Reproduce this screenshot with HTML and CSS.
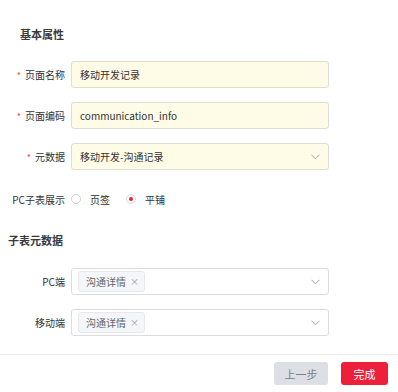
FILE: index.html
```html
<!DOCTYPE html>
<html lang="zh-CN">
<head>
    <meta charset="UTF-8">
    <meta name="viewport" content="width=device-width, initial-scale=1.0">
    <title>页面属性</title>
    <link rel="stylesheet" href="styles.css">
</head>
<body>
    <div class="panel">
        <h3 class="section-title">基本属性</h3>

        <div class="form-row">
            <label class="form-label"><span class="req">*</span>页面名称</label>
            <div class="field input-box warn">移动开发记录</div>
        </div>
        <div class="form-row">
            <label class="form-label"><span class="req">*</span>页面编码</label>
            <div class="field input-box warn">communication_info</div>
        </div>
        <div class="form-row">
            <label class="form-label"><span class="req">*</span>元数据</label>
            <div class="field input-box warn select">
                <span>移动开发-沟通记录</span>
                <svg class="arrow" width="9" height="6" viewBox="0 0 9 6"><polyline points="0.5,0.8 4.5,4.8 8.5,0.8" fill="none" stroke="#a3a3a3" stroke-width="1"/></svg>
            </div>
        </div>
        <div class="form-row radio-row">
            <label class="form-label">PC子表展示</label>
            <div class="radio-group">
                <span class="radio"><i class="dot"></i>页签</span>
                <span class="radio checked"><i class="dot"></i>平铺</span>
            </div>
        </div>

        <h3 class="section-title sub">子表元数据</h3>

        <div class="form-row">
            <label class="form-label">PC端</label>
            <div class="field input-box select">
                <span class="tag">沟通详情<em>×</em></span>
                <svg class="arrow" width="9" height="6" viewBox="0 0 9 6"><polyline points="0.5,0.8 4.5,4.8 8.5,0.8" fill="none" stroke="#a3a3a3" stroke-width="1"/></svg>
            </div>
        </div>
        <div class="form-row last">
            <label class="form-label">移动端</label>
            <div class="field input-box select">
                <span class="tag">沟通详情<em>×</em></span>
                <svg class="arrow" width="9" height="6" viewBox="0 0 9 6"><polyline points="0.5,0.8 4.5,4.8 8.5,0.8" fill="none" stroke="#a3a3a3" stroke-width="1"/></svg>
            </div>
        </div>
    </div>

    <div class="footer">
        <button class="btn btn-prev">上一步</button>
        <button class="btn btn-done">完成</button>
    </div>
</body>
</html>
```

FILE: styles.css
```css
/* Global */
body {
    margin: 0;
    background: #fff;
    font-family: "Noto Sans CJK SC", "Noto Sans", sans-serif;
    font-size: 10px;
    color: #333;
}

.panel {
    padding-top: 26px;
}

/* Section titles */
.section-title {
    margin: 0 0 19px 20px;
    font-size: 11px;
    line-height: 16px;
    font-weight: bold;
    color: #3a3a3a;
}

.section-title.sub {
    margin: 18px 0 20px 8px;
}

/* Form rows */
.form-row {
    display: flex;
    align-items: center;
    margin-bottom: 14px;
}

.form-row.last {
    margin-bottom: 18px;
}

.form-label {
    width: 65px;
    text-align: right;
    color: #333;
    flex-shrink: 0;
}

.req {
    color: #f04a3e;
    margin-right: 4px;
    font-size: 9px;
}

.field {
    margin-left: 6px;
    width: 258px;
}

.input-box {
    box-sizing: border-box;
    height: 27px;
    border: 1px solid #dcdcdc;
    border-radius: 3px;
    padding: 0 8px;
    display: flex;
    align-items: center;
    background: #fff;
}

.input-box.warn {
    background: #fefbe7;
    border-color: #e0ddd2;
}

.input-box.select {
    justify-content: space-between;
    padding-left: 6px;
    padding-right: 8px;
}

.input-box.warn.select {
    padding-left: 8px;
}

.arrow {
    display: block;
    flex-shrink: 0;
}

/* Tags */
.tag {
    height: 21px;
    box-sizing: border-box;
    display: inline-flex;
    align-items: center;
    padding: 0 5px 0 7px;
    background: #f4f6f9;
    border: 1px solid #e6e8ed;
    border-radius: 3px;
    color: #666;
}

.tag em {
    font-style: normal;
    color: #999;
    font-size: 9px;
    margin-left: 4px;
}

/* Radio */
.radio-row {
    height: 30px;
    margin-bottom: 0;
}

.radio-group {
    display: flex;
    align-items: center;
    margin-left: 6px;
}

.radio {
    display: inline-flex;
    align-items: center;
    margin-right: 16px;
    color: #333;
}

.radio .dot {
    width: 10px;
    height: 10px;
    box-sizing: border-box;
    border: 1px solid #cfcfcf;
    border-radius: 50%;
    margin-right: 9px;
    position: relative;
}

.radio.checked .dot {
    border-color: #dcdcdc;
}

.radio.checked .dot::after {
    content: "";
    position: absolute;
    left: 2px;
    top: 2px;
    width: 4px;
    height: 4px;
    border-radius: 50%;
    background: #e8202f;
}

/* Footer */
.footer {
    border-top: 1px solid #ececec;
    display: flex;
    justify-content: flex-end;
    padding: 7px 10px 0 0;
}

.btn {
    height: 23px;
    border: none;
    border-radius: 3px;
    font-family: inherit;
    font-size: 11px;
    padding: 0;
    cursor: pointer;
}

.btn-prev {
    width: 54px;
    background: #dce0e5;
    color: #7b8089;
    margin-right: 13px;
}

.btn-done {
    width: 47px;
    background: #ee1f3b;
    color: #fff;
}
```
